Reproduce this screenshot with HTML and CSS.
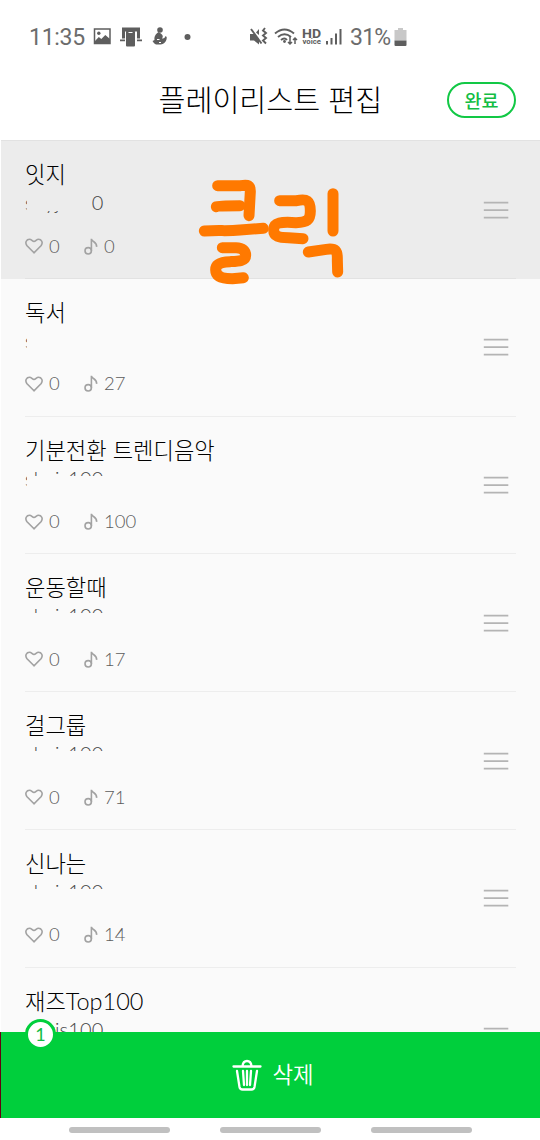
FILE: index.html
```
<!DOCTYPE html>
<html lang="ko">
<head>
    <meta charset="UTF-8">
    <meta name="viewport" content="width=device-width, initial-scale=1.0">
    <title>플레이리스트 편집</title>
    <link rel="stylesheet" href="styles.css">
</head>
<body>
    <!-- Shared icons -->
    <svg class="sprite" width="0" height="0">
        <symbol id="heart" viewBox="0 0 18 16">
            <path d="M9 14.800 1.800 7.500C-.3 4.500 1.500 1.200 4.500 1.200 6.500 1.200 7.300 3.400 9 3.400 10.700 3.400 11.500 1.200 13.500 1.200 16.500 1.200 18.300 4.500 16.200 7.500Z"/>
        </symbol>
        <symbol id="note" viewBox="0 0 14 17">
            <circle cx="4.200" cy="12.800" r="3.200"/>
            <path d="M7.400 12.800V.8C8 4.200 13.200 3.700 12.600 8.800"/>
        </symbol>
        <symbol id="handle" viewBox="0 0 26 18">
            <path d="M.8 1.700h24.500M.8 9.200h24.500M.8 16.700h24.500"/>
        </symbol>
    </svg>

    <div class="screen">
        <!-- Status bar -->
        <div class="status-bar">
            <span class="clock">11:35</span>
            <svg class="notice-icons" width="104" height="22" viewBox="0 0 104 22">
                <path class="thin" d="M2.500 3h15.500v14.500H2.500z"/>
                <circle cx="6.800" cy="7.300" r="1.700"/>
                <path d="M3 15 6.800 11l2.500 2 4-4L18 13v4.500H3z"/>
                <path d="M30 1.500h18v11h-3V5.500H33v7h-3zM28 13.500h5v1.800h-5zM45 13.500h5v1.800h-5z"/>
                <rect x="34" y="4.500" width="9" height="16" rx="1"/>
                <path class="cut" d="M36.500 6.500h4"/>
                <circle cx="68" cy="4" r="2.800"/>
                <path d="M66.500 6C70 8 72 10 70 12.500 72 13 73 11.500 73.500 10l1.200 1C75 15 72.500 18 68.500 18.500H64c-2-1-2.500-2-3.500-3.500l2-1C62 10 64 8 66.500 6z"/>
                <path class="cut" d="M65 13.500h2.500M67 16.500h2"/>
                <circle cx="95.500" cy="11" r="3"/>
            </svg>
            <svg class="system-icons" width="96" height="22" viewBox="0 0 96 22">
                <path d="M1 8h4l5 5v5.500L5 14.500H1zM7 6.500 10 3v6z"/>
                <path class="line" d="M2 3l10.500 14.500"/>
                <path class="line" d="m16 2-2 2.500 3 2.500-3 2.500 3 2.500-3 2.500 3 3"/>
                <path class="line" d="M26 7.500q9.500-8 19 0M29 11q6.500-5.500 13 0M32 14q3.500-3 6 0"/>
                <circle cx="35.500" cy="15.500" r="1.400"/>
                <path class="thin" d="M41 11v7m-2-2 2 2 2-2M46 18v-6m-2 2 2-2 2 2"/>
                <text class="hd" x="53" y="11.500" textLength="19" lengthAdjust="spacingAndGlyphs">HD</text>
                <text class="voice" x="53.500" y="17.500" textLength="18.500" lengthAdjust="spacingAndGlyphs">voice</text>
                <path d="M77 15h2v3.500h-2zM81.500 12H83.500v6.500h-2zM86 7.500h2v11h-2zM90.500 3h2v15.500h-2z"/>
            </svg>
            <span class="percent">31%</span>
            <svg class="battery" width="13" height="19" viewBox="0 0 13 19">
                <path class="empty" d="M4 0h5v2h3.500v10.500H.5V2H4z"/>
                <path d="M.5 12.500h12V17q0 1-1 1h-10q-1 0-1-1z"/>
            </svg>
        </div>

        <!-- Header -->
        <header class="header">
            <h1>플레이리스트 편집</h1>
            <button class="done-btn">완료</button>
        </header>

        <!-- Playlists -->
        <ul class="playlist">
            <li class="item selected">
                <div class="info">
                    <div class="name">잇지</div>
                    <div class="owner owner-short">shyjs100</div>
                    <div class="stats">
                        <svg class="heart"><use href="#heart"/></svg><span class="likes">0</span>
                        <svg class="note"><use href="#note"/></svg><span>0</span>
                    </div>
                </div>
                <svg class="handle"><use href="#handle"/></svg>
                <svg class="doodle" viewBox="0 0 540 420">
                    <path d="M113 77H182C205 73 211 76 211 94L207 167"/>
                    <path d="M109 140Q115 137 180 137"/>
                    <path d="M73 213C120 210 140 214 180 210L250 205"/>
                    <path d="M127 263H168C188 263 197 273 197 286 197 304 174 304 150 305 119 306 107 314 107 329 107 351 129 356 157 356L190 353"/>
                    <path d="M299 122H350C381 115 391 122 391 153 391 181 381 187 348 188 304 185 281 187 281 209 281 230 297 233 325 233L369 236"/>
                    <path d="M459 101V213"/>
                    <path d="M385 276 439 268C467 264 473 272 472 300L473 336"/>
                </svg>
            </li>
            <li class="item">
                <div class="info">
                    <div class="name">독서</div>
                    <div class="owner owner-line">shyjs100</div>
                    <div class="stats">
                        <svg class="heart"><use href="#heart"/></svg><span class="likes">0</span>
                        <svg class="note"><use href="#note"/></svg><span>27</span>
                    </div>
                </div>
                <svg class="handle"><use href="#handle"/></svg>
            </li>
            <li class="item">
                <div class="info">
                    <div class="name">기분전환 트렌디음악</div>
                    <div class="owner owner-edge">shyjs100</div>
                    <div class="stats">
                        <svg class="heart"><use href="#heart"/></svg><span class="likes">0</span>
                        <svg class="note"><use href="#note"/></svg><span>100</span>
                    </div>
                </div>
                <svg class="handle"><use href="#handle"/></svg>
            </li>
            <li class="item">
                <div class="info">
                    <div class="name">운동할때</div>
                    <div class="owner owner-half">shyjs100</div>
                    <div class="stats">
                        <svg class="heart"><use href="#heart"/></svg><span class="likes">0</span>
                        <svg class="note"><use href="#note"/></svg><span>17</span>
                    </div>
                </div>
                <svg class="handle"><use href="#handle"/></svg>
            </li>
            <li class="item">
                <div class="info">
                    <div class="name">걸그룹</div>
                    <div class="owner owner-half">shyjs100</div>
                    <div class="stats">
                        <svg class="heart"><use href="#heart"/></svg><span class="likes">0</span>
                        <svg class="note"><use href="#note"/></svg><span>71</span>
                    </div>
                </div>
                <svg class="handle"><use href="#handle"/></svg>
            </li>
            <li class="item">
                <div class="info">
                    <div class="name">신나는</div>
                    <div class="owner owner-half">shyjs100</div>
                    <div class="stats">
                        <svg class="heart"><use href="#heart"/></svg><span class="likes">0</span>
                        <svg class="note"><use href="#note"/></svg><span>14</span>
                    </div>
                </div>
                <svg class="handle"><use href="#handle"/></svg>
            </li>
            <li class="item">
                <div class="info">
                    <div class="name">재즈<span class="latin">Top100</span></div>
                    <div class="owner owner-tail">shyjs100</div>
                </div>
                <svg class="handle"><use href="#handle"/></svg>
            </li>
        </ul>

        <!-- Delete bar -->
        <div class="delete-bar">
            <span class="count">1</span>
            <svg class="trash" width="30" height="32" viewBox="0 0 30 32">
                <path d="M1.500 7.500h27M10.500 7Q11 2 15 2t4.500 5M5 12l2.500 16q.5 2.500 3 2.500h9q2.500 0 3-2.500L25 12M11 12l1 14M15 12v14M19 12l-1 14"/>
            </svg>
            <span class="label">삭제</span>
        </div>

        <!-- Navigation hints -->
        <div class="nav-bar">
            <i></i><i></i><i></i>
        </div>
    </div>
</body>
</html>
```

FILE: styles.css
```
* {
    margin: 0;
    padding: 0;
    box-sizing: border-box;
}

body {
    font-family: Lato, 'Noto Sans CJK KR', sans-serif;
    font-weight: 300;
    background: #fff;
    overflow: hidden;
}

.sprite {
    position: absolute;
}

.screen {
    width: 540px;
    height: 1140px;
    display: flex;
    flex-direction: column;
    overflow: hidden;
}

/* Status bar */
.status-bar {
    height: 72px;
    padding: 2px 0 0 29px;
    display: flex;
    align-items: center;
    font-family: Roboto, sans-serif;
    font-weight: 400;
    font-size: 23px;
    color: #6c6c6c;
    fill: #5e5e5e;
    stroke: none;
}

.clock {
    width: 63px;
    letter-spacing: -0.3px;
}

.notice-icons {
    margin-right: 53px;
}

.percent {
    width: 44px;
    margin-left: 5px;
    letter-spacing: -0.8px;
}

.thin,
.line {
    fill: none;
    stroke: #5e5e5e;
    stroke-width: 1.5;
}

.line {
    stroke-width: 1.9;
}

.cut {
    stroke: #fff;
    stroke-width: 1;
}

.hd {
    font-size: 12.5px;
    font-weight: 700;
}

.voice {
    font-size: 8px;
    font-weight: 700;
}

.empty {
    fill: #c8c8c8;
}

/* Header */
.header {
    height: 68px;
    display: grid;
    grid-template-columns: 1fr 223px 1fr;
    align-items: center;
    padding: 0 24px 13px;
}

.header h1 {
    grid-column: 2;
    font-size: 29.3px;
    line-height: 40px;
    font-weight: 300;
    color: #000;
    white-space: nowrap;
}

.done-btn {
    justify-self: end;
    width: 69px;
    height: 36px;
    margin-top: 1px;
    border: 2px solid #12c845;
    border-radius: 18px;
    background: #fff;
    color: #12bd43;
    font-family: 'Noto Sans CJK KR', sans-serif;
    font-size: 18.5px;
    line-height: 30px;
    font-weight: 500;
}

/* Playlists */
.playlist {
    height: 892px;
    margin-left: 1px;
    background: #fafafa;
    border-top: 1px solid #e2e2e2;
    list-style: none;
    overflow: hidden;
}

.item {
    --bg: #fafafa;
    position: relative;
    height: 137.75px;
    padding: 16px 31px 0 24px;
    display: flex;
    justify-content: space-between;
    background: var(--bg);
}

.item.selected {
    --bg: #ececec;
}

.item::after {
    content: '';
    position: absolute;
    left: 24px;
    right: 24px;
    bottom: 0;
    height: 1px;
    background: #ededed;
}

.selected::after {
    background: #e2e2e2;
}

.name {
    height: 34px;
    font-size: 22.2px;
    line-height: 35px;
    color: #000;
    white-space: nowrap;
}

.latin {
    font-size: 23.5px;
}

.owner {
    position: relative;
    width: 90px;
    height: 24px;
    font-size: 20px;
    letter-spacing: 0.2px;
    line-height: 23px;
    color: #444;
}

/* Hidden parts of the account name */
.owner::after {
    content: '';
    position: absolute;
    background: var(--bg);
}

.owner-short::after {
    left: 2px;
    top: 0;
    width: 65px;
    height: 20px;
}

.owner-line::after {
    left: 2px;
    top: 5px;
    width: 88px;
    height: 20px;
}

.owner-edge::after {
    left: 2px;
    top: 9px;
    width: 88px;
    height: 19px;
}

.owner-half::after {
    left: 0;
    top: 9px;
    width: 90px;
    height: 19px;
}

.stats {
    height: 24px;
    margin-top: 19px;
    display: flex;
    align-items: center;
    font-size: 18.5px;
    line-height: 23px;
    color: #5c5c5c;
}

.stats svg {
    fill: none;
    stroke: #a2a2a2;
    stroke-width: 1.6;
}

.heart {
    width: 18px;
    height: 16px;
    margin-right: 6px;
}

.likes {
    width: 35px;
}

.note {
    width: 14px;
    height: 17px;
    margin-right: 6px;
}

.handle {
    width: 26px;
    height: 18px;
    margin-top: 43.5px;
    fill: none;
    stroke: #b4b4b4;
    stroke-width: 1.8;
}

.doodle {
    position: absolute;
    left: 179px;
    top: 19px;
    width: 180px;
    height: 140px;
    z-index: 1;
    fill: none;
    stroke: #ff7900;
    stroke-width: 33;
    stroke-linecap: round;
    stroke-linejoin: round;
}

/* Delete bar */
.delete-bar {
    position: relative;
    height: 86px;
    border-left: 1px solid #640010;
    background: #00cf3c;
    color: #fff;
    display: flex;
    align-items: center;
    justify-content: center;
    gap: 10px;
    padding-left: 5px;
    font-size: 22.3px;
    font-weight: 350;
}

.label {
    margin-top: -4px;
}

.count {
    position: absolute;
    left: 24px;
    top: -13px;
    width: 31px;
    height: 31px;
    border: 3px solid #00cf3c;
    border-radius: 50%;
    background: #fff;
    color: #12bd43;
    font-size: 18px;
    font-weight: 400;
    line-height: 25px;
    text-align: center;
}

.trash {
    fill: none;
    stroke: #fff;
    stroke-width: 2.3;
    stroke-linecap: round;
}

/* Navigation hints */
.nav-bar {
    height: 22px;
    padding-top: 9px;
    display: flex;
    justify-content: center;
    gap: 50px;
}

.nav-bar i {
    width: 101px;
    height: 6px;
    border-radius: 3px;
    background: #c0c0c0;
}
```
